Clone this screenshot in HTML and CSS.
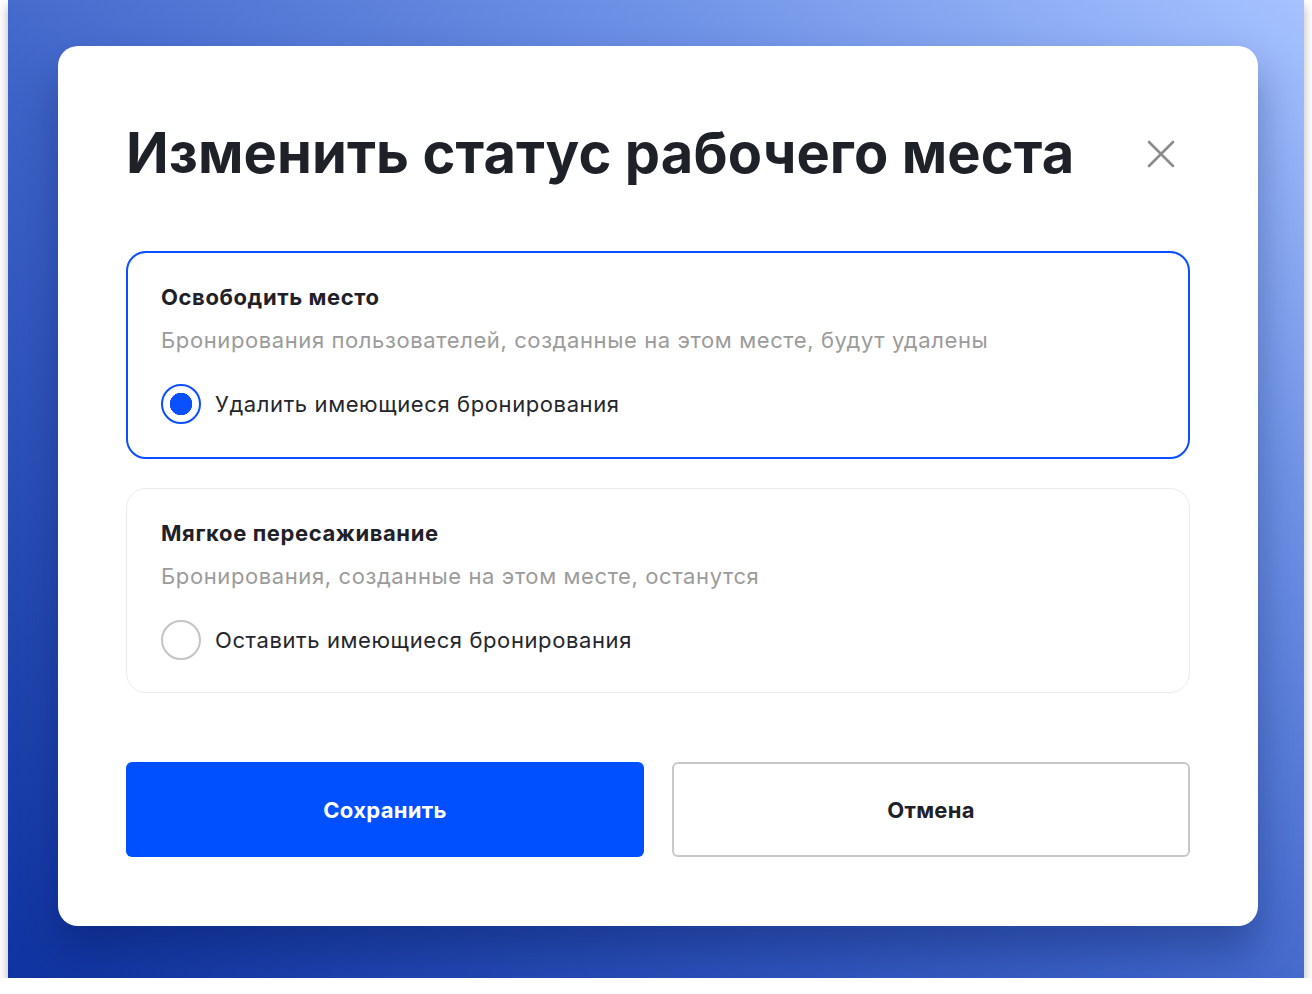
FILE: index.html
```html
<!DOCTYPE html>
<html lang="ru">
<head>
    <meta charset="UTF-8">
    <meta name="viewport" content="width=device-width, initial-scale=1.0">
    <title>Изменить статус рабочего места</title>
    <link rel="stylesheet" href="styles.css">
</head>
<body>
    <div class="backdrop">
        <div class="modal">
            <div class="modal-header">
                <h1>Изменить статус рабочего места</h1>
                <button class="close" aria-label="Закрыть">
                    <svg width="28" height="28" viewBox="0 0 28 28">
                        <path d="M2 2L26 26M26 2L2 26" stroke="#8c8c8c" stroke-width="2.6" stroke-linecap="round"/>
                    </svg>
                </button>
            </div>

            <label class="option option-active">
                <div class="option-title">Освободить место</div>
                <div class="option-desc">Бронирования пользователей, созданные на этом месте, будут удалены</div>
                <div class="radio-row">
                    <input type="radio" name="status" checked>
                    <span class="radio"></span>
                    <span>Удалить имеющиеся бронирования</span>
                </div>
            </label>

            <label class="option">
                <div class="option-title">Мягкое пересаживание</div>
                <div class="option-desc">Бронирования, созданные на этом месте, останутся</div>
                <div class="radio-row">
                    <input type="radio" name="status">
                    <span class="radio"></span>
                    <span>Оставить имеющиеся бронирования</span>
                </div>
            </label>

            <div class="actions">
                <button class="btn btn-primary">Сохранить</button>
                <button class="btn btn-secondary">Отмена</button>
            </div>
        </div>
    </div>
</body>
</html>
```

FILE: styles.css
```css
/* Модалка смены статуса */
body {
    margin: 0;
    background-color: #fff;
    font-family: Inter, "Noto Sans", Arial, sans-serif;
    color: #1f2128;
}
.backdrop {
    margin: 0 8px;
    height: 978px;
    padding: 46px 46px 0 50px;
    box-sizing: border-box;
    background: linear-gradient(to top right, #0f33a0 0%, #3d63c8 45%, #6f93e6 75%, #a6c2ff 100%);
    box-shadow: 0 6px 10px rgba(0,0,0,0.3);
}
.modal {
    width: 1200px;
    height: 880px;
    box-sizing: border-box;
    background-color: #fff;
    border-radius: 20px;
    padding: 74px 68px 0 68px;
    box-shadow: 0 24px 40px rgba(0,20,80,0.35);
}
.modal-header {
    display: flex;
    align-items: center;
    justify-content: space-between;
    margin-bottom: 64px;
}
h1 {
    margin: 0;
    font-size: 56px;
    font-weight: 700;
    line-height: 67px;
    letter-spacing: 0.1px;
    color: #1f2128;
}
.close {
    background: none;
    border: none;
    padding: 0;
    margin-right: 15px;
    width: 28px;
    height: 28px;
    cursor: pointer;
}
.option {
    display: block;
    border: 1px solid #ebebeb;
    border-radius: 20px;
    padding: 30px 34px 32px 34px;
    letter-spacing: 0.6px;
    cursor: pointer;
}
.option + .option {
    margin-top: 29px;
}
.option-active {
    border: 2px solid #0a50ff;
    padding: 30px 33px 33px 33px;
}
.option-title {
    font-size: 22px;
    font-weight: 700;
    line-height: 28px;
}
.option-desc {
    margin-top: 15px;
    font-size: 22px;
    line-height: 28px;
    color: #9b9b9b;
}
.radio-row {
    display: flex;
    align-items: center;
    gap: 14px;
    margin-top: 30px;
    font-size: 22px;
    color: #24262b;
}
.radio-row input {
    display: none;
}
.radio {
    width: 40px;
    height: 40px;
    box-sizing: border-box;
    border: 2px solid #c4c4c4;
    border-radius: 50%;
    background-color: #fff;
}
.radio-row input:checked + .radio {
    border-color: #0a50ff;
    background: radial-gradient(circle, #0a50ff 0, #0a50ff 11px, #fff 11.5px);
}
.actions {
    display: grid;
    grid-template-columns: 1fr 1fr;
    gap: 28px;
    margin-top: 69px;
}
.btn {
    height: 95px;
    border-radius: 6px;
    font-family: Inter, "Noto Sans", Arial, sans-serif;
    font-size: 22px;
    font-weight: 700;
    letter-spacing: 0.3px;
    cursor: pointer;
}
.btn-primary {
    background-color: #0050ff;
    color: #fff;
    border: none;
}
.btn-secondary {
    background-color: #fff;
    color: #1f2128;
    border: 2px solid #c8c8c8;
}
```
